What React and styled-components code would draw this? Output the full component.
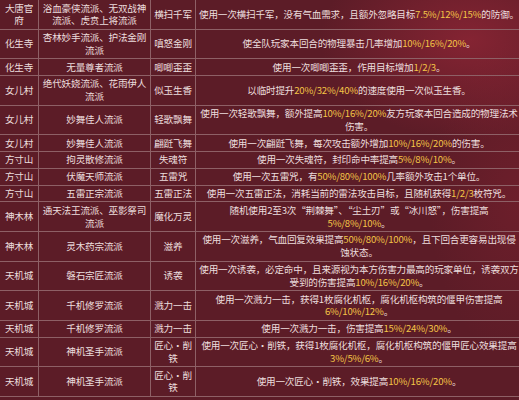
import React from "react";
import styled, { createGlobalStyle } from "styled-components";

const Global = createGlobalStyle`
  html, body { margin: 0; padding: 0; background: #5a1b26; }
  body { width: 519px; height: 400px; overflow: hidden; }
`;

const Page = styled.div`
  width: 519px;
  height: 400px;
  overflow: hidden;
  background:
    radial-gradient(ellipse 150px 100px at 470px 40px, rgba(165, 42, 60, 0.55), transparent),
    radial-gradient(ellipse 90px 160px at 519px 200px, rgba(140, 35, 50, 0.35), transparent),
    #5c1c27;
  font-family: "Noto Sans CJK SC", "Noto Sans", sans-serif;
  font-size: 9.6px;
  letter-spacing: -0.2px;
  color: #ecdede;
`;

const Table = styled.table`
  border-collapse: collapse;
  table-layout: fixed;
  width: 519px;
`;

const Row = styled.tr`
  & + & > td { border-top: 1px solid #8e6066; }
  &:last-child > td { border-bottom: 1px solid #8e6066; }
`;

const Cell = styled.td`
  width: ${(p) => p.$w}px;
  padding: 1.5px 0;
  text-align: center;
  vertical-align: middle;
  line-height: 12.8px;
  white-space: pre-line;
  & + & { border-left: 1px solid #8e6066; }
`;

const Desc = styled(Cell)`
  white-space: pre;
`;

const Hi = styled.span`
  display: inline-block;
  line-height: 12.8px;
  color: #f3c446;
`;

const rows = [
  ["大唐官\n府", "浴血豪侠流派、无双战神\n流派、虎贲上将流派", "横扫千军", "使用一次横扫千军，没有气血需求，且额外忽略目标{7.5%/12%/15%}的防御。"],
  ["化生寺", "杏林妙手流派、护法金刚\n流派", "嗔怒金刚", "使全队玩家本回合的物理暴击几率增加{10%/16%/20%}。"],
  ["化生寺", "无量尊者流派", "唧唧歪歪", "使用一次唧唧歪歪，作用目标增加{1/2/3}。"],
  ["女儿村", "绝代妖娆流派、花雨伊人\n流派", "似玉生香", "以临时提升{20%/32%/40%}的速度使用一次似玉生香。"],
  ["女儿村", "妙舞佳人流派", "轻歌飘舞", "使用一次轻歌飘舞，额外提高{10%/16%/20%}友方玩家本回合造成的物理法术\n伤害。"],
  ["女儿村", "妙舞佳人流派", "翩跹飞舞", "使用一次翩跹飞舞，每次攻击额外增加{10%/16%/20%}的伤害。"],
  ["方寸山", "拘灵散修流派", "失魂符", "使用一次失魂符，封印命中率提高{5%/8%/10%}。"],
  ["方寸山", "伏魔天师流派", "五雷咒", "使用一次五雷咒，有{50%/80%/100%}几率额外攻击1个单位。"],
  ["方寸山", "五雷正宗流派", "五雷正法", "使用一次五雷正法，消耗当前的雷法攻击目标，且随机获得{1/2/3}枚符咒。"],
  ["神木林", "通天法王流派、巫影祭司\n流派", "魔化万灵", "随机使用2至3次“荆棘舞”、“尘土刃”或“冰川怒”，伤害提高\n{5%/8%/10%}。"],
  ["神木林", "灵木药宗流派", "滋养", "使用一次滋养，气血回复效果提高{50%/80%/100%}，且下回合更容易出现侵\n蚀状态。"],
  ["天机城", "磐石宗匠流派", "诱袭", "使用一次诱袭，必定命中，且来源视为本方伤害力最高的玩家单位，诱袭双方\n受到的伤害提高{10%/16%/20%}。"],
  ["天机城", "千机修罗流派", "溅力一击", "使用一次溅力一击，获得1枚腐化机枢，腐化机枢构筑的偃甲伤害提高\n{6%/10%/12%}。"],
  ["天机城", "千机修罗流派", "溅力一击", "使用一次溅力一击，伤害提高{15%/24%/30%}。"],
  ["天机城", "神机圣手流派", "匠心·削\n铁", "使用一次匠心·削铁，获得1枚腐化机枢，腐化机枢构筑的偃甲匠心效果提高\n{3%/5%/6%}。"],
  ["天机城", "神机圣手流派", "匠心·削\n铁", "使用一次匠心·削铁，效果提高{10%/16%/20%}。"],
];

function renderDesc(text) {
  const parts = text.split(/(\{[^}]*\})/);
  return parts.map((p, i) =>
    p.startsWith("{") ? <Hi key={i}>{p.slice(1, -1)}</Hi> : <React.Fragment key={i}>{p}</React.Fragment>
  );
}

export default function App() {
  return (
    <>
      <Global />
      <Page>
        <Table>
          <tbody>
            {rows.map((r, i) => (
              <Row key={i}>
                <Cell $w={38}>{r[0]}</Cell>
                <Cell $w={111}>{r[1]}</Cell>
                <Cell $w={44}>{r[2]}</Cell>
                <Desc $w={326}>{renderDesc(r[3])}</Desc>
              </Row>
            ))}
          </tbody>
        </Table>
      </Page>
    </>
  );
}
